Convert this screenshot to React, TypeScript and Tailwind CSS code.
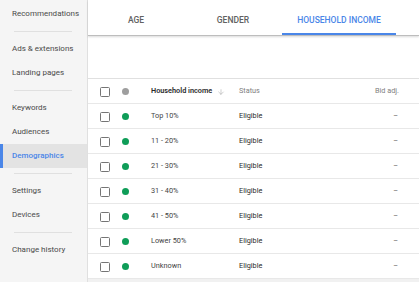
import React from 'react';
import { ArrowDown } from 'lucide-react';

const font = { fontFamily: 'Roboto, "Noto Sans", sans-serif' };

function NavItem({ label, active }: { label: string; active?: boolean }) {
  return (
    <div
      className={`h-[24px] flex items-center pl-[12px] text-[8px] relative ${
        active ? 'bg-[#e3e3e3] text-[#4a86e8] font-medium' : 'text-[#4a4a4a]'
      }`}
    >
      {active && <div className="absolute left-0 top-0 bottom-0 w-[3px] bg-[#4a86e8]" />}
      {label}
    </div>
  );
}

function Divider() {
  return <div className="h-px bg-[#e0e0e0] my-[5px] ml-[14px] mr-[15px]" />;
}

function Checkbox() {
  return <div className="w-[10px] h-[10px] border-[1.5px] border-[#757575] rounded-[1.5px]" />;
}

const rows = ['Top 10%', '11 - 20%', '21 - 30%', '31 - 40%', '41 - 50%', 'Lower 50%', 'Unknown'];

export default function App() {
  return (
    <div className="w-[419px] h-[282px] flex overflow-hidden bg-white antialiased" style={font}>
      <div className="w-[88px] shrink-0 bg-[#f5f5f5] border-r border-[#e0e0e0] pt-[2px]">
        <NavItem label="Recommendations" />
        <Divider />
        <NavItem label="Ads & extensions" />
        <NavItem label="Landing pages" />
        <Divider />
        <NavItem label="Keywords" />
        <NavItem label="Audiences" />
        <NavItem label="Demographics" active />
        <Divider />
        <NavItem label="Settings" />
        <NavItem label="Devices" />
        <Divider />
        <NavItem label="Change history" />
      </div>

      <div className="flex-1 flex flex-col min-w-0">
        <div className="h-[36px] flex shrink-0 border-b border-[#bdbdbd] shadow-[0_1px_2px_rgba(0,0,0,0.15)] relative z-10">
          <div className="w-[96px] flex items-center justify-center pt-[6px] text-[8.5px] font-medium text-[#616161]">
            AGE
          </div>
          <div className="w-[98px] flex items-center justify-center pt-[6px] text-[8.5px] font-medium text-[#616161]">
            GENDER
          </div>
          <div className="w-[114px] flex items-center justify-center pt-[6px] text-[8.5px] font-medium text-[#4a86e8] relative">
            HOUSEHOLD INCOME
            <div className="absolute left-0 right-0 bottom-0 h-[2px] bg-[#4a86e8]" />
          </div>
        </div>

        <div className="h-[42px] shrink-0" />

        <div className="border-t border-[#e0e0e0]">
          <div className="h-[25px] flex items-center border-b border-[#e8e8e8] pl-[12px] pr-[20px] pt-px text-[7.3px]">
            <Checkbox />
            <div className="w-[7px] h-[7px] rounded-full bg-[#9e9e9e] ml-[11.5px]" />
            <div className="ml-[22.5px] w-[88px] flex items-center font-semibold text-[#2a2a2a]">
              Household income
              <ArrowDown size={8} className="ml-[5px] text-[#9e9e9e]" strokeWidth={1.5} />
            </div>
            <div className="text-[#808080]">Status</div>
            <div className="ml-auto text-[#808080]">Bid adj.</div>
          </div>
          {rows.map((r) => (
            <div
              key={r}
              className="h-[25px] flex items-center border-b border-[#e8e8e8] pl-[12px] pr-[20px] pt-px text-[7.3px]"
            >
              <Checkbox />
              <div className="w-[7px] h-[7px] rounded-full bg-[#0f9d58] ml-[11.5px]" />
              <div className="ml-[22.5px] w-[88px] text-[#444444]">{r}</div>
              <div className="text-[#2a2a2a]">Eligible</div>
              <div className="ml-auto text-[#616161] pr-[1px]">–</div>
            </div>
          ))}
          <div className="h-[10px] bg-[#f1f1f1]" />
        </div>
      </div>
    </div>
  );
}
